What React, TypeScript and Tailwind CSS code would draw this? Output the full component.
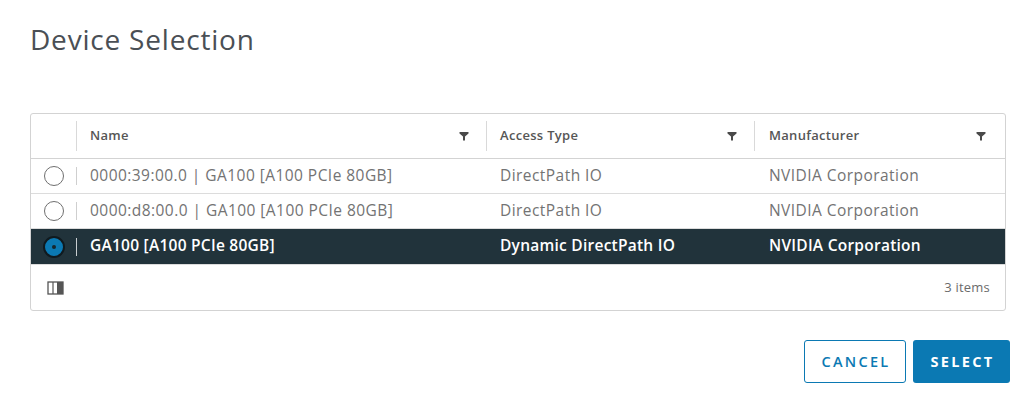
import React from "react";

const Filter = () => (
  <svg width="10" height="10" viewBox="0 0 10 10" className="shrink-0">
    <path d="M0.5 1 H9.5 V2.6 L6 5.6 V9.5 H4 V5.6 L0.5 2.6 Z" fill="#4a4a4a" />
  </svg>
);

const Radio = ({ selected }: { selected?: boolean }) =>
  selected ? (
    <div className="w-[22px] h-[22px] rounded-full bg-[#0b79b3] border-2 border-[#101a1f] flex items-center justify-center">
      <div className="w-[4px] h-[4px] rounded-full bg-[#17262d]" />
    </div>
  ) : (
    <div className="w-[20px] h-[20px] rounded-full border border-[#6f6f6f] bg-white" />
  );

const rows = [
  { name: "0000:39:00.0 | GA100 [A100 PCIe 80GB]", access: "DirectPath IO", man: "NVIDIA Corporation" },
  { name: "0000:d8:00.0 | GA100 [A100 PCIe 80GB]", access: "DirectPath IO", man: "NVIDIA Corporation" },
  { name: "GA100 [A100 PCIe 80GB]", access: "Dynamic DirectPath IO", man: "NVIDIA Corporation", selected: true },
];

export default function App() {
  return (
    <div
      className="w-[1035px] h-[410px] bg-white relative"
      style={{ fontFamily: "'Open Sans', 'Liberation Sans', sans-serif" }}
    >
      <div className="pl-[30px] pt-[21px]">
        <h1 className="text-[28px] leading-[36px] text-[#4a4f55] font-normal tracking-[0.8px]">Device Selection</h1>
      </div>
      <div className="ml-[30px] mt-[56px] w-[976px] border border-[#d3d3d3] rounded-[3px] overflow-hidden">
        <div className="grid grid-cols-[46px_410px_268px_1fr] h-[45px] border-b border-[#d3d3d3] items-center">
          <div className="h-[30px] border-r border-[#d9d9d9]" />
          <div className="flex items-center justify-between pl-[13px] pr-[17px] h-[30px] border-r border-[#d9d9d9]">
            <span className="text-[13px] font-semibold text-[#565656] tracking-[0.3px]">Name</span>
            <Filter />
          </div>
          <div className="flex items-center justify-between pl-[13px] pr-[17px] h-[30px] border-r border-[#d9d9d9]">
            <span className="text-[13px] font-semibold text-[#565656] tracking-[0.3px]">Access Type</span>
            <Filter />
          </div>
          <div className="flex items-center justify-between pl-[14px] pr-[19px] h-[30px]">
            <span className="text-[13px] font-semibold text-[#565656] tracking-[0.3px]">Manufacturer</span>
            <Filter />
          </div>
        </div>
        {rows.map((r, i) => (
          <div
            key={i}
            className={
              "grid grid-cols-[46px_410px_268px_1fr] h-[35px] items-center text-[15.5px] leading-[20px] " +
              (r.selected
                ? "bg-[#21333b] text-white font-semibold tracking-[0.25px]"
                : "bg-white text-[#737373] border-b border-[#dcdcdc] tracking-[0.45px]")
            }
          >
            <div className="flex items-center h-full">
              <div className="w-[45px] flex justify-center pl-[1px]">
                <Radio selected={r.selected} />
              </div>
              <div className={"h-[18px] w-px " + (r.selected ? "bg-[#c8cdd0]" : "bg-[#cfcfcf]")} />
            </div>
            <div className="pl-[13px] whitespace-nowrap pb-[3px]">{r.name}</div>
            <div className="pl-[13px] whitespace-nowrap pb-[3px]">{r.access}</div>
            <div className="pl-[14px] whitespace-nowrap pb-[3px]">{r.man}</div>
          </div>
        ))}
        <div className="h-[46px] flex items-center justify-between pl-[16px] pr-[15px] border-t border-[#dcdcdc]">
          <svg width="17" height="14" viewBox="0 0 17 14">
            <rect x="1" y="1" width="15" height="12" fill="none" stroke="#555" strokeWidth="1.3" />
            <line x1="6" y1="1" x2="6" y2="13" stroke="#555" strokeWidth="1.2" />
            <rect x="10" y="1" width="6" height="12" fill="#555" />
          </svg>
          <span className="text-[13px] text-[#6b6b6b] tracking-[0.2px]">3 items</span>
        </div>
      </div>
      <div className="flex justify-end gap-[7px] pr-[25px] mt-[29px]">
        <button className="h-[43px] w-[102px] border border-[#0b79b3] rounded-[3px] bg-white text-[#0b79b3] text-[14.5px] font-semibold tracking-[2.3px] pl-[2px]">
          CANCEL
        </button>
        <button className="h-[43px] w-[97px] rounded-[3px] bg-[#0b79b3] text-white text-[14.5px] font-bold tracking-[2.3px] pl-[2px]">
          SELECT
        </button>
      </div>
    </div>
  );
}
